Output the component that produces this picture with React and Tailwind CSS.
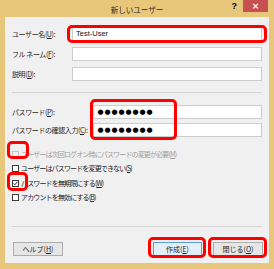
import React from "react";

const jp = { fontFamily: '"Noto Sans CJK JP", "Noto Sans", sans-serif' };

const Key = ({ k }) => (
  <>
    (<span className="underline">{k}</span>)
  </>
);

const Field = ({ label, k, labelW, children }) => (
  <div className="flex items-center h-[14px]">
    <div className={`${labelW} shrink-0 text-[7px] tracking-[-0.4px] text-[#1e1e1e] leading-none`}>
      {label}
      <Key k={k} />:
    </div>
    <div className="flex-1 h-[14px] bg-white border border-[#cdcdcd] flex items-center pl-[3px]">
      {children}
    </div>
  </div>
);

const Dots = () => (
  <div className="flex items-center">
    {Array.from({ length: 8 }).map((_, i) => (
      <span
        key={i}
        className="inline-flex w-[7px] justify-center text-[7px] leading-none text-black"
        style={{ fontFamily: '"DejaVu Sans", sans-serif' }}
      >
        ●
      </span>
    ))}
  </div>
);

const Check = ({ label, k, checked, disabled, extra = "" }) => (
  <div className={`flex items-center h-[14px] ${extra}`}>
    <div
      className={`w-[7px] h-[7px] shrink-0 border ${
        disabled ? "border-[#c2c2c2] bg-[#f2f2f2]" : "border-[#3a3a3a] bg-white"
      } flex items-center justify-center`}
    >
      {checked && (
        <svg width="7" height="7" viewBox="0 0 7 7">
          <path d="M0.8 3.4 L2.6 5.2 L6.2 1.2" fill="none" stroke="#111" strokeWidth="1.3" />
        </svg>
      )}
    </div>
    <span
      className={`ml-[2px] text-[7px] tracking-[-0.85px] leading-none whitespace-nowrap ${
        disabled ? "text-[#9e9e9e]" : "text-[#1e1e1e]"
      }`}
    >
      {label}
      <Key k={k} />
    </span>
  </div>
);

const Btn = ({ label, k, primary }) => (
  <div
    className={`h-[14px] flex items-center justify-center text-[7px] leading-none text-[#1e1e1e] border ${
      primary ? "w-[49px] bg-[#e3effb] border-[#5a9be0]" : "w-[50px] bg-[#e6e6e6] border-[#adadad]"
    }`}
  >
    {label}
    <Key k={k} />
  </div>
);

const Mark = ({ cls }) => (
  <div className={`absolute border-[3px] border-[#ff0000] rounded-[5px] pointer-events-none ${cls}`} />
);

export default function App() {
  return (
    <div className="w-[274px] h-[269px] bg-[#e9c77a] flex flex-col" style={jp}>
      {/* title bar */}
      <div className="h-[17px] grid grid-cols-[1fr_auto_1fr]">
        <div />
        <div className="pt-[3px] text-[7.5px] text-[#2a2a2a] leading-none flex items-center">
          新しいユーザー
        </div>
        <div className="flex justify-end items-start">
          <span
            className="mt-[2px] text-[9px] font-bold leading-none text-black"
            style={{ fontFamily: '"Liberation Sans", sans-serif' }}
          >
            ?
          </span>
          <div className="ml-[6px] mr-[6px] w-[25px] h-[12px] bg-[#c75050] flex items-center justify-center">
            <span
              className="text-white text-[9px] font-bold leading-none"
              style={{ fontFamily: '"DejaVu Sans", sans-serif' }}
            >
              ×
            </span>
          </div>
        </div>
      </div>

      {/* client area */}
      <div className="mx-[5px] mb-[6px] flex-1 bg-[#f0f0f0] relative flex flex-col px-[7px]">
        <div className="pt-[10px] flex flex-col gap-[6px]">
          <Field label="ユーザー名" k="U" labelW="w-[60px]">
            <span
              className="text-[7.5px] leading-none text-[#111]"
              style={{ fontFamily: '"Liberation Sans", sans-serif' }}
            >
              Test-User
            </span>
          </Field>
          <Field label="フル ネーム" k="F" labelW="w-[60px]" />
          <Field label="説明" k="D" labelW="w-[60px]" />
        </div>

        <div className="mt-[11px] border-t border-[#d6d6d6]" />

        <div className="mt-[12px] flex flex-col gap-[4px]">
          <Field label="パスワード" k="P" labelW="w-[81px]">
            <Dots />
          </Field>
          <Field label="パスワードの確認入力" k="C" labelW="w-[81px]">
            <Dots />
          </Field>
        </div>

        <div className="mt-[10px] flex flex-col">
          <Check label="ユーザーは次回ログオン時にパスワードの変更が必要" k="M" disabled />
          <Check label="ユーザーはパスワードを変更できない" k="S" />
          <Check label="パスワードを無期限にする" k="W" checked extra="mt-[1px]" />
          <Check label="アカウントを無効にする" k="B" />
        </div>

        <div className="mt-[22px] border-t border-[#d6d6d6]" />

        <div className="mt-[15px] flex justify-between">
          <div className="ml-[1px]">
            <Btn label="ヘルプ" k="H" />
          </div>
          <div className="flex gap-[11px] -mr-[1px]">
            <Btn label="作成" k="E" primary />
            <Btn label="閉じる" k="O" />
          </div>
        </div>

        {/* red annotation boxes */}
        <Mark cls="left-[62px] top-[8px] w-[200px] h-[18px]" />
        <Mark cls="left-[85px] top-[82px] w-[87px] h-[41px]" />
        <Mark cls="left-[2px] top-[124px] w-[22px] h-[18px]" />
        <Mark cls="left-[2px] top-[155px] w-[21px] h-[19px]" />
        <Mark cls="left-[143px] top-[220px] w-[58px] h-[21px]" />
        <Mark cls="left-[203px] top-[220px] w-[59px] h-[21px]" />
      </div>
    </div>
  );
}
